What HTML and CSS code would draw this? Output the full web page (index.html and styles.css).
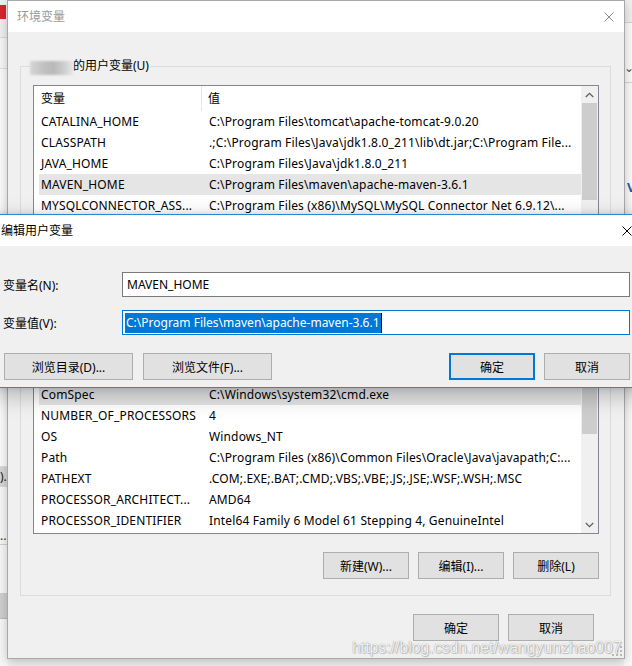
FILE: index.html
```html
<!DOCTYPE html>
<html lang="zh-CN">
<head>
<meta charset="utf-8">
<title>环境变量</title>
<link rel="stylesheet" href="styles.css">
</head>
<body>
<div class="desktop">
  <div class="bg-left">
    <div class="bl-top"><span class="bl-red"></span></div>
    <div class="bl-line l1"></div>
    <div class="bl-mid"></div>
    <div class="bl-btn b1">).</div>
    <div class="bl-dots">...</div>
    <div class="bl-btn b2"></div>
  </div>
  <div class="bg-right">
    <div class="br-top"></div>
    <div class="br-mark">⌄</div>
    <div class="br-v">V</div>
  </div>

  <section class="win env">
    <header class="titlebar inactive">
      <span class="title">环境变量</span>
      <svg class="close" width="10" height="10" viewBox="0 0 10 10"><path d="M0.5 0.5L9.5 9.5M9.5 0.5L0.5 9.5" stroke="#8c8c8c" stroke-width="1" fill="none"/></svg>
    </header>
    <div class="win-body">
      <fieldset class="group">
        <legend><span class="blur"></span>的用户变量(U)</legend>
        <div class="listview">
          <div class="lv-main">
            <div class="lv-head"><span class="c1">变量</span><span class="c2">值</span></div>
            <div class="lv-row"><span class="c1">CATALINA_HOME</span><span class="c2">C:\Program Files\tomcat\apache-tomcat-9.0.20</span></div>
            <div class="lv-row"><span class="c1">CLASSPATH</span><span class="c2">.;C:\Program Files\Java\jdk1.8.0_211\lib\dt.jar;C:\Program File...</span></div>
            <div class="lv-row"><span class="c1">JAVA_HOME</span><span class="c2">C:\Program Files\Java\jdk1.8.0_211</span></div>
            <div class="lv-row sel"><span class="c1">MAVEN_HOME</span><span class="c2">C:\Program Files\maven\apache-maven-3.6.1</span></div>
            <div class="lv-row"><span class="c1">MYSQLCONNECTOR_ASS...</span><span class="c2">C:\Program Files (x86)\MySQL\MySQL Connector Net 6.9.12\...</span></div>
            <div class="lv-row"><span class="c1">OneDrive</span><span class="c2">C:\Users\Administrator\OneDrive</span></div>
            <div class="lv-row"><span class="c1">Path</span><span class="c2">C:\Users\Administrator\AppData\Local\Microsoft\WindowsApps;</span></div>
            <div class="lv-row"><span class="c1">TEMP</span><span class="c2">C:\Users\Administrator\AppData\Local\Temp</span></div>
            <div class="lv-row"><span class="c1">TMP</span><span class="c2">C:\Users\Administrator\AppData\Local\Temp</span></div>
            <div class="lv-row"><span class="c1">ALLUSERSPROFILE</span><span class="c2">C:\ProgramData</span></div>
            <div class="lv-row"><span class="c1">CATALINA_HOME</span><span class="c2">C:\Program Files\tomcat\apache-tomcat-9.0.20</span></div>
            <div class="lv-row"><span class="c1">CLASSPATH</span><span class="c2">.;%JAVA_HOME%\lib\dt.jar;%JAVA_HOME%\lib\tools.jar</span></div>
            <div class="lv-row"><span class="c1">CommonProgramFiles</span><span class="c2">C:\Program Files\Common Files</span></div>
            <div class="lv-row sel"><span class="c1">ComSpec</span><span class="c2">C:\Windows\system32\cmd.exe</span></div>
            <div class="lv-row"><span class="c1">NUMBER_OF_PROCESSORS</span><span class="c2">4</span></div>
            <div class="lv-row"><span class="c1">OS</span><span class="c2">Windows_NT</span></div>
            <div class="lv-row"><span class="c1">Path</span><span class="c2">C:\Program Files (x86)\Common Files\Oracle\Java\javapath;C:...</span></div>
            <div class="lv-row"><span class="c1">PATHEXT</span><span class="c2">.COM;.EXE;.BAT;.CMD;.VBS;.VBE;.JS;.JSE;.WSF;.WSH;.MSC</span></div>
            <div class="lv-row"><span class="c1">PROCESSOR_ARCHITECT...</span><span class="c2">AMD64</span></div>
            <div class="lv-row"><span class="c1">PROCESSOR_IDENTIFIER</span><span class="c2">Intel64 Family 6 Model 61 Stepping 4, GenuineIntel</span></div>
          </div>
          <div class="vscroll">
            <div class="sb-arrow"><svg width="9" height="6" viewBox="0 0 9 6"><path d="M0.8 5L4.5 1.3L8.2 5" stroke="#606060" stroke-width="1.3" fill="none"/></svg></div>
            <div class="sb-thumb t1"></div>
            <div class="sb-gap"></div>
            <div class="sb-thumb t2"></div>
            <div class="sb-track"></div>
            <div class="sb-arrow"><svg width="9" height="6" viewBox="0 0 9 6"><path d="M0.8 1L4.5 4.7L8.2 1" stroke="#606060" stroke-width="1.3" fill="none"/></svg></div>
          </div>
        </div>
        <div class="btn-row">
          <button class="btn">新建(W)...</button>
          <button class="btn">编辑(I)...</button>
          <button class="btn">删除(L)</button>
        </div>
      </fieldset>
      <div class="dlg-buttons">
        <button class="btn">确定</button>
        <button class="btn">取消</button>
      </div>
    </div>
    <svg class="grip" width="10" height="10" viewBox="0 0 10 10">
      <g fill="#b8b8b8"><rect x="8" y="0" width="2" height="2"/><rect x="4" y="4" width="2" height="2"/><rect x="8" y="4" width="2" height="2"/><rect x="0" y="8" width="2" height="2"/><rect x="4" y="8" width="2" height="2"/><rect x="8" y="8" width="2" height="2"/></g>
    </svg>
  </section>

  <section class="win edit">
    <header class="titlebar active">
      <span class="title">编辑用户变量</span>
      <svg class="close" width="10" height="10" viewBox="0 0 10 10"><path d="M0.5 0.5L9.5 9.5M9.5 0.5L0.5 9.5" stroke="#000" stroke-width="1" fill="none"/></svg>
    </header>
    <div class="edit-body">
      <div class="form">
        <label class="lbl">变量名(N):</label>
        <div class="field"><span class="ftext">MAVEN_HOME</span></div>
        <label class="lbl">变量值(V):</label>
        <div class="field focus"><span class="sel-text">C:\Program Files\maven\apache-maven-3.6.1</span><span class="caret"></span></div>
      </div>
      <div class="edit-buttons">
        <button class="btn wide">浏览目录(D)...</button>
        <button class="btn wide">浏览文件(F)...</button>
        <span class="spacer"></span>
        <button class="btn default">确定</button>
        <button class="btn">取消</button>
      </div>
    </div>
  </section>

  <div class="watermark">https://blog.csdn.net/wangyunzhao007</div>
</div>
</body>
</html>
```

FILE: styles.css
```css
* { box-sizing: border-box; }
html, body { margin: 0; padding: 0; }
body {
  width: 632px;
  height: 666px;
  overflow: hidden;
  background: #f0f0f0;
  font-family: "Noto Sans", "Noto Sans CJK SC", sans-serif;
  font-size: 12px;
  color: #000;
}
.desktop { position: relative; width: 632px; height: 666px; overflow: hidden; background: #f2f2f2; }

/* background windows peeking out */
.bg-left { position: absolute; left: 0; top: 0; width: 8px; height: 666px; background: #f7f7f7; display: flex; flex-direction: column; }
.bl-top { height: 38px; background: #f0f0f0; border-bottom: 1px solid #d9d9d9; position: relative; }
.bl-red { display: block; margin-top: 5px; width: 6px; height: 14px; background: #d8262c; }
.bl-line { height: 1px; background: #dedede; margin-top: 30px; }
.bl-mid { height: 398px; background: #fbfbfb; border-bottom: 1px solid #dcdcdc; }
.bl-btn { height: 20px; background: #d6d6d6; font-size: 12px; line-height: 20px; color: #222; overflow: hidden; }
.bl-dots { margin-top: 46px; height: 12px; line-height: 6px; color: #333; overflow: hidden; border-bottom: 1px solid #d0d0d0; }
.bl-btn.b2 { margin-top: 48px; height: 26px; background: #cfcfcf; border-bottom: 1px solid #bbb; }

.bg-right { position: absolute; right: 0; top: 0; width: 8px; height: 666px; background: #fafafa; }
.br-top { height: 23px; background: #efefef; border-bottom: 1px solid #d4d4d4; }
.br-mark { margin-top: 40px; height: 20px; font-size: 12px; line-height: 10px; color: #555; border-bottom: 1px solid #d4d4d4; }
.br-v { margin-top: 95px; padding-left: 3px; font-size: 13px; font-weight: bold; color: #1a5fb4; }

/* windows */
.win { position: absolute; display: flex; flex-direction: column; background: #f0f0f0; }
.win.env {
  left: 7px; top: 0; width: 618px; height: 659px;
  border: 1px solid #a8a8a8;
  box-shadow: 0 3px 10px rgba(0,0,0,0.22);
}
.titlebar { height: 31px; flex: none; display: flex; align-items: center; justify-content: space-between; background: #fff; }
.env .titlebar { padding: 0 10px 0 9px; }
.titlebar.inactive .title { color: #999; }
.titlebar .title { font-size: 12px; line-height: 16px; }
.close { display: block; flex: none; }

.win-body { flex: 1; padding: 26px 13px 0 12px; display: flex; flex-direction: column; }

.group {
  margin: 0;
  padding: 11px 11px 16px 12px;
  border: 1px solid #dcdcdc;
  min-width: 0;
}
.group legend {
  padding: 0 1px 0 0;
  margin-left: -3px;
  height: 16px;
  line-height: 16px;
  font-size: 12px;
  display: flex;
  align-items: center;
}
.blur {
  display: block;
  width: 43px;
  height: 14px;
  margin-top: 3px;
  background: linear-gradient(90deg, #d6d6d6 0%, #c2c2c2 30%, #b9b9b9 55%, #cfcfcf 80%, #e6e6e6 100%);
  filter: blur(1.2px);
}

.listview {
  height: 449px;
  border: 1px solid #828790;
  background: #fff;
  display: flex;
}
.lv-main { flex: 1; min-width: 0; overflow: hidden; }
.lv-head { display: flex; height: 25px; line-height: 25px; white-space: nowrap; }
.lv-head .c1 { width: 168px; flex: none; padding-left: 7px; border-right: 1px solid #e5e5e5; }
.lv-head .c2 { padding-left: 6px; }
.lv-row { display: flex; height: 21px; line-height: 21px; margin-left: 5px; white-space: nowrap; letter-spacing: 0.15px; }
.lv-row .c1 { width: 163px; flex: none; padding-left: 2px; overflow: hidden; }
.lv-row .c2 { padding-left: 7px; overflow: hidden; }
.lv-row.sel { background: #e5e5e5; }

.vscroll { width: 17px; flex: none; display: flex; flex-direction: column; background: #f0f0f0; }
.sb-arrow { height: 17px; flex: none; display: flex; align-items: center; justify-content: center; }
.sb-thumb { flex: none; background: #cdcdcd; margin: 0 1px; }
.sb-thumb.t1 { height: 97px; }
.sb-gap { height: 186px; flex: none; }
.sb-thumb.t2 { height: 48px; }
.sb-track { flex: 1; }

.btn {
  font: inherit;
  font-size: 12px;
  color: #000;
  height: 27px;
  width: 86px;
  padding: 0;
  background: #e1e1e1;
  border: 1px solid #adadad;
  border-radius: 0;
  flex: none;
}
.btn-row { display: flex; justify-content: flex-end; gap: 9px; margin-top: 18px; }
.dlg-buttons { display: flex; justify-content: flex-end; gap: 9px; margin-top: 18px; margin-right: 17px; }

.grip { position: absolute; right: 2px; bottom: 2px; }

/* edit dialog */
.win.edit {
  left: -8px; top: 214px; width: 658px;
  border: 1px solid #2b86d6;
  box-shadow: 0 7px 22px rgba(0,0,0,0.26), 0 0 6px rgba(0,0,0,0.12);
}
.edit .titlebar { padding: 0 17px 0 8px; }
.edit-body { padding: 26px 19px 7px 11px; }
.form { display: grid; grid-template-columns: 118px 1fr; grid-auto-rows: 25px; row-gap: 13px; }
.lbl { display: flex; align-items: center; margin-left: -1px; }
.field {
  border: 1px solid #7a7a7a;
  background: #fff;
  display: flex;
  align-items: center;
  padding-left: 4px;
  white-space: nowrap;
}
.field.focus { border-color: #0078d7; padding-left: 2px; }
.sel-text { background: #0078d7; color: #fff; line-height: 20px; padding: 0 1px; }
.caret { width: 1px; height: 20px; background: #000; }
.edit-buttons { display: flex; margin-top: 18px; gap: 9px; }
.btn.wide { width: 129px; }
.edit-buttons .btn.wide + .btn.wide { margin-left: 1px; }
.spacer { flex: 1; }
.btn.default { border: 2px solid #0078d7; }

.watermark {
  position: absolute;
  left: 352px;
  top: 637px;
  font-family: "Liberation Sans", Arial, sans-serif;
  font-size: 15.8px;
  line-height: 22px;
  color: rgba(255,255,255,0.9);
  text-shadow: 0 0 1px rgba(0,0,0,0.45), 1px 1px 1px rgba(0,0,0,0.18);
  white-space: nowrap;
}
```
